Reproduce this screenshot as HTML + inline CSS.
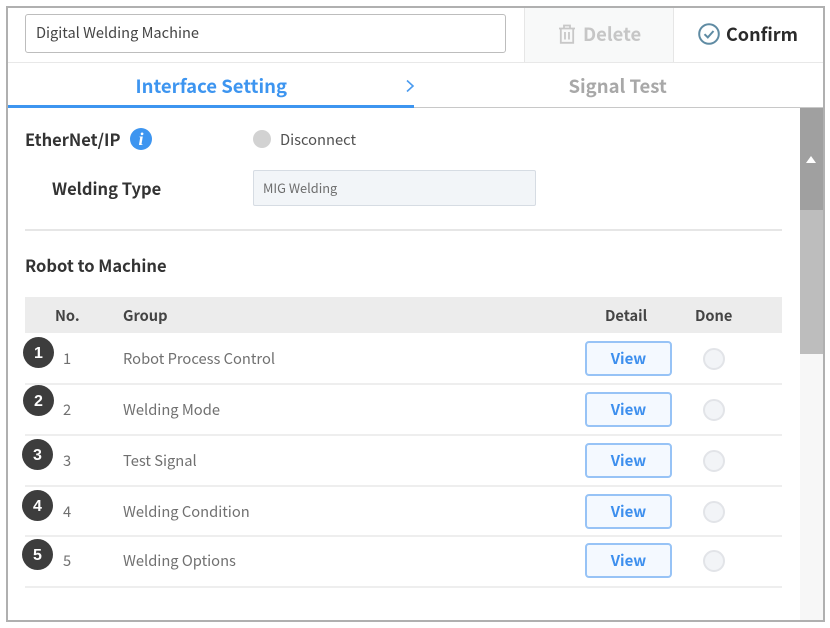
<!DOCTYPE html>
<html><head><meta charset="utf-8"><style>
html,body{margin:0;padding:0;width:830px;height:628px;overflow:hidden;background:#fff}
body{position:relative;font-family:"Noto Sans CJK KR","Noto Sans CJK JP","Liberation Sans",sans-serif;color:#333}
.a{position:absolute;box-sizing:border-box}
.t{position:absolute;white-space:nowrap;line-height:20px;height:20px}
.ln{position:absolute;left:25px;width:757px;height:2px;background:#eeeeee}
.v{position:absolute;left:585px;width:87px;height:35px;box-sizing:border-box;border:2px solid #97c3f6;border-radius:4px;background:#f4f9ff;color:#3d8fee;font-size:15px;font-weight:700;text-align:center;line-height:32px}
.c{position:absolute;left:703px;width:22px;height:22px;box-sizing:border-box;border:2px solid #e2e4e8;border-radius:50%;background:#f2f4f7}
.n{position:absolute;width:31px;height:31px;border-radius:50%;background:#3d3d3d;color:#fff;font:700 16px/33px "Liberation Sans",sans-serif;text-align:center}
.g{font-size:14.7px;color:#707070}
.h{font-size:14.6px;font-weight:700;color:#444}
</style></head><body>
<div class="a" style="left:6px;top:6px;width:819px;height:616px;border:2px solid #b0b0b0"></div>

<div class="a" style="left:25px;top:14px;width:481px;height:39px;border:1px solid #bdbdbd;border-radius:3px"></div>
<div class="t" style="left:36px;top:23px;font-size:14.6px;color:#444">Digital Welding Machine</div>

<div class="a" style="left:524px;top:8px;width:150px;height:54px;background:#f8f9f9;border-left:1px solid #e6e6e6;border-right:1px solid #e6e6e6"></div>
<svg class="a" style="left:558px;top:24px" width="18" height="20" viewBox="0 0 18 20" fill="none" stroke="#c8c8c8" stroke-width="1.8"><path d="M1 4.5H17M6 4.5V1.5H12V4.5M2.8 4.5V18.8H15.2V4.5M7 8V15.5M11 8V15.5"/></svg>
<div class="t" style="left:583px;top:24px;font-size:18.4px;font-weight:700;color:#c6c6c6">Delete</div>

<svg class="a" style="left:698px;top:23px" width="22" height="22" viewBox="0 0 22 22" fill="none" stroke="#5f8ba3" stroke-width="2"><circle cx="11" cy="11" r="9.8"/><path d="M6.5 11.2L9.8 14.4L15.5 8"/></svg>
<div class="t" style="left:726px;top:24px;font-size:18px;font-weight:700;color:#2a2a2a">Confirm</div>

<div class="a" style="left:8px;top:62px;width:815px;height:1px;background:#e8e8e8"></div>

<div class="t" style="left:135.5px;top:76px;font-size:18.5px;font-weight:700;color:#3d95f0">Interface Setting</div>
<svg class="a" style="left:405px;top:79px" width="11" height="14" viewBox="0 0 11 14" fill="none" stroke="#4a9bf0" stroke-width="1.6"><path d="M2 1.5L8 7L2 12.5"/></svg>
<div class="t" style="left:568.5px;top:76px;font-size:18.5px;font-weight:700;color:#a8a8a8">Signal Test</div>
<div class="a" style="left:8px;top:107px;width:815px;height:1px;background:#c8c8c8"></div>
<div class="a" style="left:8px;top:105px;width:406px;height:3px;background:#3d95f0"></div>

<div class="a" style="left:800px;top:108px;width:23px;height:512px;background:#f7f7f7"></div>
<div class="a" style="left:800px;top:108px;width:23px;height:102px;background:#a0a0a0"></div>
<div class="a" style="left:800px;top:210px;width:23px;height:144px;background:#bdbdbd"></div>
<div class="a" style="left:806px;top:156px;width:0;height:0;border-left:5px solid transparent;border-right:5px solid transparent;border-bottom:7px solid #fff"></div>

<div class="t" style="left:25px;top:129px;font-size:16.5px;font-weight:700;color:#333">EtherNet/IP</div>
<div class="a" style="left:130px;top:128px;width:22px;height:22px;border-radius:50%;background:#3d95f0;color:#fff;font:italic 700 18px/22px 'Liberation Serif',serif;text-align:center">i</div>
<div class="a" style="left:253px;top:130px;width:18px;height:18px;border-radius:50%;background:#d2d2d2"></div>
<div class="t" style="left:280px;top:130px;font-size:14.7px;color:#505050">Disconnect</div>

<div class="t" style="left:52px;top:178px;font-size:16.5px;font-weight:700;color:#333">Welding Type</div>
<div class="a" style="left:253px;top:170px;width:283px;height:36px;background:#f2f5f8;border:1px solid #d6dce3;border-radius:2px"></div>
<div class="t" style="left:263px;top:178px;font-size:12.8px;color:#6e6e6e">MIG Welding</div>

<div class="a" style="left:25px;top:229px;width:757px;height:2px;background:#e6e6e6"></div>

<div class="t" style="left:25px;top:255px;font-size:16.5px;font-weight:700;color:#333">Robot to Machine</div>

<div class="a" style="left:25px;top:297px;width:757px;height:36px;background:#ececec"></div>
<div class="t h" style="left:55px;top:306px">No.</div>
<div class="t h" style="left:123px;top:306px">Group</div>
<div class="t h" style="left:605px;top:306px">Detail</div>
<div class="t h" style="left:695px;top:306px">Done</div>

<div class="t g" style="left:63px;top:349px">1</div><div class="t g" style="left:123px;top:349px">Robot Process Control</div>
<div class="v" style="top:341px">View</div><div class="c" style="top:348px"></div><div class="ln" style="top:383px"></div>

<div class="t g" style="left:63px;top:400px">2</div><div class="t g" style="left:123px;top:400px">Welding Mode</div>
<div class="v" style="top:392px">View</div><div class="c" style="top:399px"></div><div class="ln" style="top:434px"></div>

<div class="t g" style="left:63px;top:451px">3</div><div class="t g" style="left:123px;top:451px">Test Signal</div>
<div class="v" style="top:443px">View</div><div class="c" style="top:450px"></div><div class="ln" style="top:485px"></div>

<div class="t g" style="left:63px;top:502px">4</div><div class="t g" style="left:123px;top:502px">Welding Condition</div>
<div class="v" style="top:494px">View</div><div class="c" style="top:501px"></div><div class="ln" style="top:535px"></div>

<div class="t g" style="left:63px;top:551px">5</div><div class="t g" style="left:123px;top:551px">Welding Options</div>
<div class="v" style="top:543px">View</div><div class="c" style="top:550px"></div><div class="ln" style="top:586px"></div>

<div class="n" style="left:23px;top:337px">1</div>
<div class="n" style="left:23px;top:385px">2</div>
<div class="n" style="left:22px;top:439px">3</div>
<div class="n" style="left:22px;top:490px">4</div>
<div class="n" style="left:22px;top:539px">5</div>
</body></html>
